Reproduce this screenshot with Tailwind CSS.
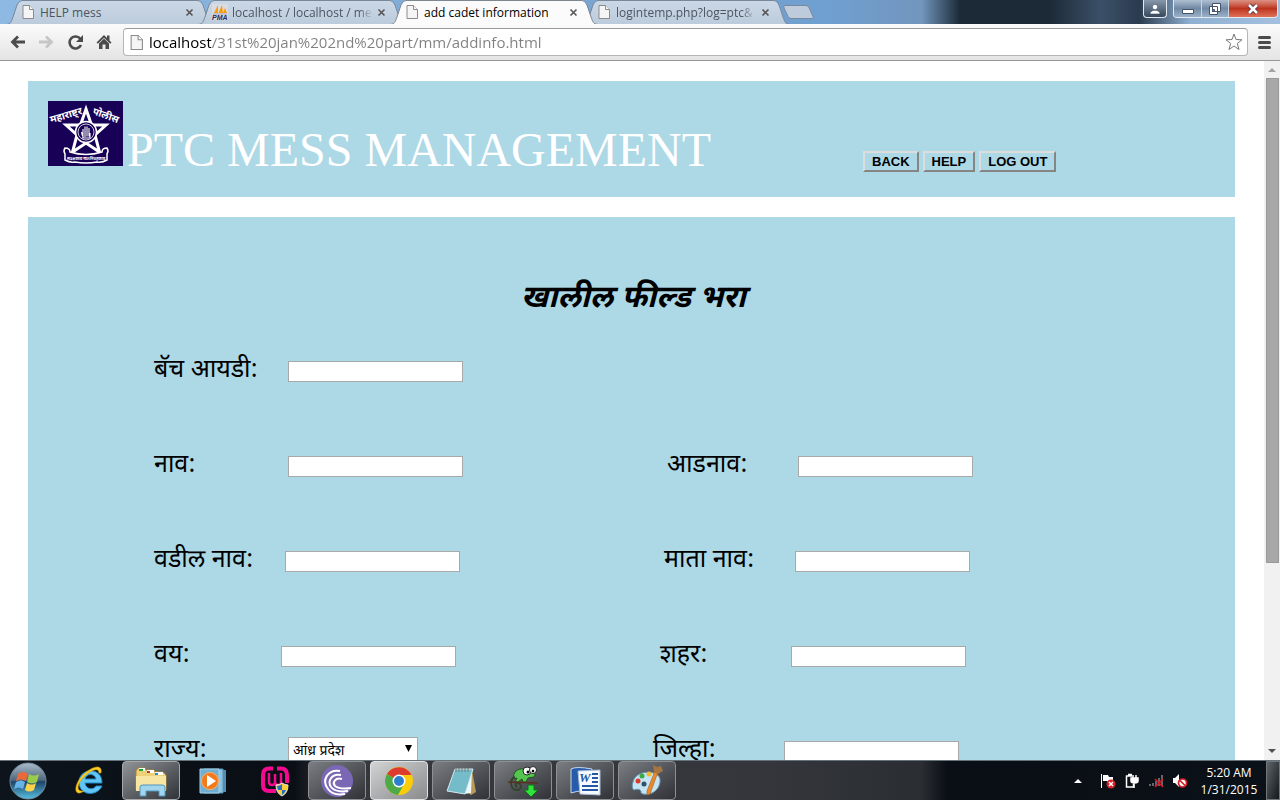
<!DOCTYPE html>
<html lang="mr">
<head>
<meta charset="utf-8">
<title>add cadet information</title>
<script src="https://cdn.jsdelivr.net/npm/@tailwindcss/browser@4"></script>
</head>
<body class="flex h-screen flex-col overflow-hidden bg-white font-['Open_Sans','Noto_Sans',sans-serif] text-black">

<svg class="absolute h-0 w-0" aria-hidden="true">
  <defs>
    <linearGradient id="tabFill" x1="0" y1="0" x2="0" y2="1"><stop offset="0" stop-color="#cbd8e6"/><stop offset="1" stop-color="#bccbdc"/></linearGradient>
    <linearGradient id="glass" x1="0" y1="0" x2="0" y2="1"><stop offset="0" stop-color="#a9bccb"/><stop offset=".48" stop-color="#4f667c"/><stop offset=".52" stop-color="#1d4468"/><stop offset="1" stop-color="#58bfe0"/></linearGradient>
  </defs>
  <symbol id="page" viewBox="0 0 12 14"><path d="M1 .5h6.500l4 4v9H1z" fill="#f5f5f5" stroke="#8b8b8b"/><path d="M7.500.5v4h4" fill="#fff" stroke="#8b8b8b"/></symbol>
  <symbol id="close" viewBox="0 0 9 9"><path d="M1.500 1.500l6 6m0-6l-6 6" stroke="#555" stroke-width="1.600"/></symbol>
  <symbol id="tab" viewBox="0 0 208 24" preserveAspectRatio="none"><path d="M0 24.500C5 24 5 22 7 17L11 5Q13 .5 16 .5H192Q195 .5 197 5l4 12c2 5 2 7 7 7.500"/></symbol>
</svg>

<!-- Tab strip -->
<header class="relative z-10 flex h-6 shrink-0 justify-between bg-[linear-gradient(90deg,#8eb9e2_0%,#7ba6d3_45%,#6f9fd0_65%,#7296bd_72%,#1c2a38_75%,#1c2a38_82%,#3b5068_86%,#2a3b4e_89%,#8fb0d2_93%,#a3c0de_100%)]">
  <nav class="relative flex pl-1.5" aria-label="Tabs">
    <div class="relative -mr-4 flex w-52 items-center gap-1.5 pl-4 pr-5">
      <svg class="absolute inset-0 h-6 w-52" fill="url(#tabFill)" stroke="#788799"><use href="#tab"/></svg>
      <svg class="relative h-3.5 w-3 shrink-0"><use href="#page"/></svg>
      <a href="#" class="relative flex-1 overflow-hidden whitespace-nowrap pt-0.5 text-xs text-[#4b5560]">HELP mess</a>
      <button class="relative" aria-label="Close tab"><svg class="h-[9px] w-[9px]"><use href="#close"/></svg></button>
    </div>
    <div class="relative -mr-4 flex w-52 items-center gap-1 pl-3.5 pr-5">
      <svg class="absolute inset-0 h-6 w-52" fill="url(#tabFill)" stroke="#788799"><use href="#tab"/></svg>
      <svg class="relative h-4 w-4 shrink-0" viewBox="0 0 16 16"><path d="M0 0h16v16H0z" fill="#d9dbe0"/><path d="M6 1L2 9h4zM10 1L6.500 9H11zM13 4l-2 5h4z" fill="#f89c0e"/><path d="M1 10h14" stroke="#a3a5bb"/><text x="0" y="16" font-family="Liberation Sans" font-size="7" font-weight="bold" font-style="italic" fill="#27285c">PMA</text></svg>
      <a href="#" class="relative flex-1 overflow-hidden whitespace-nowrap mask-r-from-90% pt-0.5 text-xs text-[#4b5560]">localhost / localhost / mes</a>
      <button class="relative" aria-label="Close tab"><svg class="h-[9px] w-[9px]"><use href="#close"/></svg></button>
    </div>
    <div class="relative z-10 -mr-4 flex w-52 items-center gap-1.5 pl-4 pr-5">
      <svg class="absolute inset-0 h-6 w-52 overflow-visible" fill="#fbfbfb" stroke="#7d8792"><use href="#tab"/></svg>
      <svg class="relative h-3.5 w-3 shrink-0"><use href="#page"/></svg>
      <a href="#" class="relative flex-1 overflow-hidden whitespace-nowrap pt-0.5 text-xs" aria-current="page">add cadet information</a>
      <button class="relative" aria-label="Close tab"><svg class="h-[9px] w-[9px]"><use href="#close"/></svg></button>
    </div>
    <div class="relative flex w-52 items-center gap-1.5 pl-4 pr-5">
      <svg class="absolute inset-0 h-6 w-52" fill="url(#tabFill)" stroke="#788799"><use href="#tab"/></svg>
      <svg class="relative h-3.5 w-3 shrink-0"><use href="#page"/></svg>
      <a href="#" class="relative flex-1 overflow-hidden whitespace-nowrap mask-r-from-90% pt-0.5 text-xs text-[#4b5560]">logintemp.php?log=ptc&amp;</a>
      <button class="relative" aria-label="Close tab"><svg class="h-[9px] w-[9px]"><use href="#close"/></svg></button>
    </div>
    <button class="-ml-2 self-start pt-1" aria-label="New tab"><svg class="h-4 w-8" viewBox="0 0 32 16"><path d="M3 1.500h21q2 0 3 2l4 9q1 2-1 2H9q-2 0-3-2L2 4Q1 1.500 3 1.500z" fill="#bdcbdc" stroke="#76899f"/></svg></button>
  </nav>
  <div class="flex gap-1.5 pr-0.5">
    <button class="flex h-[18px] w-6 items-center justify-center rounded-b border border-t-0 border-slate-200 bg-linear-to-b from-[#8798ab] to-[#39495d]" aria-label="User"><svg class="h-3 w-3" viewBox="0 0 12 12" fill="#fff" stroke="#34465b" stroke-width=".6"><circle cx="6" cy="4" r="2.700"/><path d="M1 11c0-5 10-5 10 0z"/></svg></button>
    <div class="flex h-[18px] overflow-hidden rounded-b border border-t-0 border-slate-200">
      <button class="flex w-7 items-center justify-center border-r border-slate-300 bg-linear-to-b from-[#aebfd1] via-[#7189a4] to-[#9bb1c8]" aria-label="Minimize"><svg class="h-3 w-3" viewBox="0 0 12 12"><path d="M.5 6.500h11v4H.5z" fill="#fff" stroke="#44546a"/></svg></button>
      <button class="flex w-[27px] items-center justify-center border-r border-slate-300 bg-linear-to-b from-[#aebfd1] via-[#7189a4] to-[#9bb1c8]" aria-label="Restore"><svg class="h-3 w-3" viewBox="0 0 12 12" fill="#fff" stroke="#44546a"><path d="M3.500.5h8v8h-8zM.5 3.500h8v8h-8z"/><path d="M3.500 6.500h2v2h-2z" fill="#6d8299"/></svg></button>
      <button class="flex w-12 items-center justify-center bg-linear-to-b from-[#db9082] via-[#bd321c] to-[#df7057]" aria-label="Close"><svg class="h-3 w-3" viewBox="0 0 12 12"><path d="M2 2l8 8m0-8l-8 8" stroke="#5a3540" stroke-width="4.500"/><path d="M2 2l8 8m0-8l-8 8" stroke="#fff" stroke-width="2.500"/></svg></button>
    </div>
  </div>
</header>

<!-- Toolbar -->
<div class="flex h-[37px] shrink-0 items-center border-b border-[#989898] bg-linear-to-b from-[#fbfbfb] to-[#e4e4e4] pr-[9px] pl-[9px]">
  <button class="mr-3" aria-label="Back"><svg class="h-4 w-[17px]" viewBox="0 0 17 16" fill="none" stroke="#4b4b4b" stroke-width="2.800"><path d="M16 8H4M9 2.500L3.500 8 9 13.500"/></svg></button>
  <button class="mr-3" aria-label="Forward"><svg class="h-4 w-[17px]" viewBox="0 0 17 16" fill="none" stroke="#c6c6c6" stroke-width="2.800"><path d="M1 8h12M8 2.500L13.500 8 8 13.500"/></svg></button>
  <button class="mr-3" aria-label="Reload"><svg class="h-[17px] w-[17px]" viewBox="0 0 17 17"><path d="M13.500 5A6 6 0 1 0 14 11" fill="none" stroke="#4b4b4b" stroke-width="2.600"/><path d="M16 1v7H9z" fill="#4b4b4b"/></svg></button>
  <button class="mr-[11px]" aria-label="Home"><svg class="h-4 w-4" viewBox="0 0 16 16" fill="#4b4b4b"><path d="M8 1L.5 8.500l1.300 1.300L8 3.700l6.200 6.100 1.300-1.300L13.500 6.500V1.500H11V4z"/><path d="M3 9.500l5-5 5 5V15H9.500v-4.500h-3V15H3z"/></svg></button>
  <div class="flex h-7 flex-1 items-center rounded-sm border border-[#b5b5b5] border-t-[#9a9a9a] bg-white pl-1.5 pr-1">
    <svg class="mr-1.5 h-[15px] w-[13px]"><use href="#page"/></svg>
    <input aria-label="Address" class="min-w-0 flex-1 bg-linear-to-r from-black from-[62px] to-[#808080] to-[62px] bg-clip-text text-[15px] text-transparent outline-none" value="localhost/31st%20jan%202nd%20part/mm/addinfo.html">
    <button aria-label="Bookmark"><svg class="h-[18px] w-[18px]" viewBox="0 0 18 18" fill="#fff" stroke="#777" stroke-linejoin="round"><path d="M9 1l2 5.500 6 .3-4.700 3.700L14 16.500 9 13l-5 3.500 1.700-6L1 6.800l6-.3z"/></svg></button>
  </div>
  <button class="ml-2.5" aria-label="Menu"><svg class="h-[13px] w-[13px]" viewBox="0 0 13 13" stroke="#4b4b4b" stroke-width="3" stroke-linecap="round"><path d="M1.500 1.500h10M1.500 6.500h10M1.500 11.500h10"/></svg></button>
</div>

<!-- Page -->
<div class="flex min-h-0 flex-1">
  <main class="flex min-w-0 flex-1 flex-col gap-5 overflow-hidden pt-5 pl-7 pr-[29px]">
    <section class="flex h-29 shrink-0 items-baseline bg-[#add8e6] pl-5 pt-5">
      <svg class="h-[65px] w-[75px]" viewBox="0 0 75 65" role="img" aria-label="Maharashtra Police">
        <path d="M0 0h75v65H0z" fill="#170055"/>
        <g fill="#fff" font-family="Noto Sans Devanagari, Noto Sans, sans-serif" font-weight="bold">
          <text x="3" y="22" font-size="10" transform="rotate(-16 3 22)">महाराष्ट्र</text>
          <text x="44" y="13" font-size="10" transform="rotate(20 44 13)">पोलीस</text>
        </g>
        <path d="M38 8l5.500 16H58L47 34l4.500 17L38 42 24.500 51 29 34 18 24h14.500z" fill="#170055" stroke="#fff" stroke-width="3"/>
        <circle cx="38" cy="31" r="10.500" fill="#170055" stroke="#fff" stroke-width="1.500"/>
        <circle cx="38" cy="31" r="8" fill="none" stroke="#fff" stroke-width=".8"/>
        <path d="M35 37v-9m2 8V25.500m2 10V25.500m2 10V27m-6.500 8l-1-4M34 37h8v-5" fill="none" stroke="#fff" stroke-width="1.100"/>
        <path d="M17 47q5 0 5 4 16 5 32 0 0-4 5-4 2 3 0 6v6q-5 3-10 2-11 2-22 0-5 1-10-2v-6q-2-3 0-6z" fill="#170055" stroke="#fff" stroke-width="1.500"/>
        <text x="19" y="59" font-size="4" font-weight="bold" fill="#fff" font-family="Noto Sans Devanagari, Noto Sans, sans-serif">सद्रक्षणाय खलनिग्रहणाय</text>
      </svg>
      <h1 class="ml-1 w-[736px] whitespace-nowrap font-['Liberation_Serif',serif] text-5xl text-white">PTC MESS MANAGEMENT</h1>
      <div class="flex gap-1 font-['Liberation_Sans',sans-serif] text-[13px] leading-[17px] font-bold">
        <button class="border-2 border-[#dddddd] border-r-[#858585] border-b-[#858585] px-[7px]">BACK</button>
        <button class="border-2 border-[#dddddd] border-r-[#858585] border-b-[#858585] px-[7px]">HELP</button>
        <button class="border-2 border-[#dddddd] border-r-[#858585] border-b-[#858585] px-[7px]">LOG OUT</button>
      </div>
    </section>

    <form class="flex-1 bg-[#add8e6] pt-14 pl-[126px] font-['Noto_Sans_Devanagari','Noto_Sans',sans-serif] text-[25px]">
      <h2 class="mr-[122px] text-center text-[31px] leading-[54px] font-bold italic">खालील फील्ड भरा</h2>
      <div class="mt-[18px] flex h-[95px] items-start leading-[52px]">
        <label for="batch" class="w-[134px]">बॅच आयडी:</label>
        <input id="batch" class="mt-4 h-[21px] w-[175px] border border-[#a9a9a9] bg-white px-1 text-sm">
      </div>
      <div class="flex h-[95px] items-start leading-[52px]">
        <label for="name" class="w-[134px]">नाव:</label>
        <input id="name" class="mt-4 mr-[204px] h-[21px] w-[175px] border border-[#a9a9a9] bg-white px-1 text-sm">
        <label for="surname" class="w-[131px]">आडनाव:</label>
        <input id="surname" class="mt-4 h-[21px] w-[175px] border border-[#a9a9a9] bg-white px-1 text-sm">
      </div>
      <div class="flex h-[95px] items-start leading-[52px]">
        <label for="father" class="w-[131px]">वडील नाव:</label>
        <input id="father" class="mt-4 mr-[204px] h-[21px] w-[175px] border border-[#a9a9a9] bg-white px-1 text-sm">
        <label for="mother" class="w-[131px]">माता नाव:</label>
        <input id="mother" class="mt-4 h-[21px] w-[175px] border border-[#a9a9a9] bg-white px-1 text-sm">
      </div>
      <div class="flex h-[95px] items-start leading-[52px]">
        <label for="age" class="w-[127px]">वय:</label>
        <input id="age" class="mt-4 mr-[204px] h-[21px] w-[175px] border border-[#a9a9a9] bg-white px-1 text-sm">
        <label for="city" class="w-[131px]">शहर:</label>
        <input id="city" class="mt-4 h-[21px] w-[175px] border border-[#a9a9a9] bg-white px-1 text-sm">
      </div>
      <div class="flex h-[95px] items-start leading-[52px]">
        <label for="state" class="w-[134px]">राज्य:</label>
        <div class="relative mt-3 mr-[235px] flex">
          <select id="state" class="h-[27px] w-[130px] appearance-none border border-[#a9a9a9] bg-white pt-0.5 pl-1 text-sm leading-6"><option>आंध्र प्रदेश</option></select>
          <svg class="pointer-events-none absolute top-2 right-1.5 h-[7px] w-[7px]" viewBox="0 0 7 7"><path d="M0 0h7L3.500 7z"/></svg>
        </div>
        <label for="district" class="w-[131px]">जिल्हा:</label>
        <input id="district" class="mt-4 h-[21px] w-[175px] border border-[#a9a9a9] bg-white px-1 text-sm">
      </div>
    </form>
  </main>
  <div class="flex w-4 flex-col items-center bg-[#f1f1f1]" aria-hidden="true">
    <svg class="h-[17px] w-4 shrink-0" viewBox="0 0 16 17"><path d="M4 11l4-4 4 4z" fill="#a3a3a3"/></svg>
    <div class="h-[69.4%] w-[13px] border border-[#999] bg-[#a8a8a8]"></div>
    <svg class="mt-auto h-[17px] w-4" viewBox="0 0 16 17"><path d="M4 6l4 4 4-4z" fill="#505050"/></svg>
  </div>
</div>

<!-- Taskbar -->
<footer class="flex h-10 shrink-0 border-t border-[#67717a] bg-[linear-gradient(90deg,#0d141b_0%,#0a0e15_23%,#34383c_26%,#34363b_60%,#2a2e33_72%,#0a0e15_74%,#0b1118_100%)] font-['Open_Sans',sans-serif]">
  <div class="flex gap-1">
    <button class="flex w-14 items-center justify-center" aria-label="Start"><svg class="h-[38px] w-[38px]" viewBox="0 0 38 38"><circle cx="19" cy="19" r="18" fill="url(#glass)" stroke="#718a9c"/><path d="M9 12q5-4 10 0l-2 7q-5-3-10 0z" fill="#e9693a"/><path d="M20 12q5 3 10 0l-2 8q-5 3-10 0z" fill="#9bcb4a"/><path d="M7 20q5-3 9 0l-2 7q-4-3-9 0z" fill="#67b4e8"/><path d="M18 21q5 3 9 0l-2 7q-5 3-9 0z" fill="#fbd24a"/></svg></button>
    <button class="flex w-[58px] items-center justify-center" aria-label="Internet Explorer"><svg class="h-9 w-9" viewBox="0 0 36 36"><path d="M31 20H14c1 7 9 7 11 3h6C26 34 8 33 8 19 8 5 31 3 31 20zM14 16h11c-1-6-10-6-11 0z" fill="#62c6f5" stroke="#1a88cc"/><path d="M30 10c2-11-12-5-19 3C2 23 3 35 13 28c-7 1-8-4-2-12C18 8 28 3 28 10z" fill="#f9cf26" stroke="#d69a0b" stroke-width=".6"/></svg></button>
    <button class="flex w-[58px] items-center justify-center rounded-sm border border-[#a5a8aa] bg-linear-to-br from-[#929598] to-[#303439]" aria-label="Explorer"><svg class="h-9 w-9" viewBox="0 0 36 36"><path d="M3 8l2-3h7l1 2h8l1 2h8l3 3v15H3z" fill="#edd17a" stroke="#ad8536"/><path d="M6 5h6v3H6z" fill="#fff"/><path d="M6 6h4v2H6z" fill="#18a82c"/><path d="M14 7h7v3h-7z" fill="#fff"/><path d="M14 8h3v2h-3z" fill="#c0392b"/><path d="M22 9h8v3h-8z" fill="#fff"/><path d="M22 10h3v2h-3z" fill="#1d8fe0"/><path d="M3 13h30v15H3z" fill="#f7e6a3"/><path d="M7 33v-9q0-2 3-2h19q3 0 3 2v9h-6v-5H13v5z" fill="#a1d5ed" stroke="#5095bb"/></svg></button>
    <button class="flex w-[58px] items-center justify-center" aria-label="Media Player"><svg class="h-8 w-8" viewBox="0 0 32 32"><path d="M12 5h17v22H12z" fill="#4f8fb4"/><path d="M7 4h19v24H7z" fill="#8dc1dd" stroke="#5693b7"/><path d="M3 4h19v24H3z" fill="#71aed0" stroke="#a4d2e9"/><circle cx="13" cy="16" r="8.500" fill="#f27a1a" stroke="#f8b174"/><path d="M10 10l9 6-9 6z" fill="#fff"/></svg></button>
    <button class="flex w-[58px] items-center justify-center" aria-label="WampServer"><svg class="h-8 w-8" viewBox="0 0 32 32"><path d="M14 3.500H10Q4 3.500 4 10v10q0 6 6 6h7M18 3.500h4q6 0 6 6.500v8" fill="none" stroke="#f30a8f" stroke-width="4"/><path d="M10 8v9q0 3 3 3t3-3V9v8q0 3 3 3t3-3V8" fill="none" stroke="#f30a8f" stroke-width="2.500"/><path d="M17 20q4 0 6-2 3 2 6 2 0 8-6 11-6-3-6-11z" fill="#f7ce35" stroke="#e1e5e8"/><path d="M18 21q3 0 5-2v6h-4zM23 25h4q-1 3-4 5z" fill="#2a6dc0"/></svg></button>
    <button class="flex w-[58px] items-center justify-center rounded-sm border border-[#8d8f93] bg-linear-to-br from-[#7b7e82] to-[#303238]" aria-label="BitTorrent"><svg class="h-[34px] w-[34px]" viewBox="0 0 34 34"><circle cx="17" cy="17" r="16" fill="#7a68b4"/><g fill="none" stroke="#fff" stroke-width="2"><path d="M20 7C8 5 1 16 8 25q5 7 17 5"/><path d="M21 11c-9-2-14 6-10 12 4 5 10 5 17 4"/><path d="M22 15c-7-2-10 4-7 7 4 3 9 3 16 2"/></g></svg></button>
    <button class="flex w-[58px] items-center justify-center rounded-sm border border-[#e2e2e2] bg-linear-to-br from-[#d3d3d3] to-[#898b8d]" aria-label="Chrome"><svg class="h-[30px] w-[30px]" viewBox="0 0 30 30"><circle cx="15" cy="15" r="14" fill="#fbcc0a"/><path d="M15 15L2.900 8A14 14 0 0 1 27.500 9H15z" fill="#dd3b2e"/><path d="M2.900 8A14 14 0 0 0 14 29l6-11-5-3z" fill="#4eaa48"/><circle cx="15" cy="15" r="6.500" fill="#fff"/><circle cx="15" cy="15" r="5" fill="#2c7fd0"/></svg></button>
    <button class="flex w-[58px] items-center justify-center rounded-sm border border-[#8d8f93] bg-linear-to-br from-[#7b7e82] to-[#303238]" aria-label="Notepad"><svg class="h-8 w-8" viewBox="0 0 32 32"><path d="M27 5l4 22-5 3-4-3z" fill="#b89b59"/><path d="M27 5l-1 23-7 1z" fill="#eef6f7"/><path d="M10 4h18l-8 25-18-3z" fill="#75bccb" stroke="#d5e9ed"/><path d="M11 3v4m3-4v4m3-4v4m3-4v4m3-4v4" stroke="#777"/></svg></button>
    <button class="flex w-[58px] items-center justify-center rounded-sm border border-[#8d8f93] bg-linear-to-br from-[#7b7e82] to-[#303238]" aria-label="Chameleon"><svg class="h-[34px] w-[34px]" viewBox="0 0 34 34"><path d="M8 15C6 8 12 4 18 5l7 1q6 3 3 7l-6 1-2 4h-3l-1-3-4 3H9l2-4z" fill="#54c64f" stroke="#1c541b"/><path d="M9 13c-6 2-5 13 2 13 5 0 5-7 1-7-3 0-3 3-1 4" fill="none" stroke="#32452c" stroke-width="2"/><path d="M2 18l30 1" stroke="#5b2e20" stroke-width="1.500"/><circle cx="21" cy="7" r="4" fill="#fff" stroke="#222"/><circle cx="27" cy="6" r="3.500" fill="#fff" stroke="#222"/><circle cx="22" cy="8" r="1.500"/><circle cx="27" cy="7" r="1.300"/><path d="M22 21h6v5h4l-7 7-7-7h4z" fill="#2de23a" stroke="#126c19"/></svg></button>
    <button class="flex w-[58px] items-center justify-center rounded-sm border border-[#8d8f93] bg-linear-to-br from-[#7b7e82] to-[#303238]" aria-label="Word"><svg class="h-8 w-8" viewBox="0 0 32 32"><path d="M2 4q5-3 21 0v23q-9-3-21 1z" fill="#285caa" stroke="#c5d8ef"/><path d="M9 6l22-1v25l-20-1z" fill="#f7faff" stroke="#a9bed8"/><text x="10" y="17" font-family="Liberation Serif" font-size="13" font-weight="bold" font-style="italic" fill="#2457a5">W</text><path d="M23 9h6m-6 4h6m-6 4h6M13 21h16m-16 4h16" stroke="#2457a5" stroke-width="2"/></svg></button>
    <button class="flex w-[58px] items-center justify-center rounded-sm border border-[#8d8f93] bg-linear-to-br from-[#7b7e82] to-[#303238]" aria-label="Paint"><svg class="h-[34px] w-[34px]" viewBox="0 0 34 34"><path d="M3 18C5 6 28 5 30 15c1 9-7 17-17 15q-3-1-2-3-2-3-7-1-3-2-1-8z" fill="#c5e5f5" stroke="#6597b2"/><circle cx="8" cy="17" r="2.500" fill="#db3a2d"/><circle cx="12" cy="12" r="2.500" fill="#3cab43"/><circle cx="19" cy="10" r="2.500" fill="#f2b92c"/><circle cx="14" cy="20" r="2.500" fill="#35506a"/><path d="M28 8l-8 22-3 1V27l8-20z" fill="#e88b2c" stroke="#a45815" stroke-width=".6"/><path d="M23 1l4 2 4-1 2 5-5 3-4-2z" fill="#a57542"/></svg></button>
  </div>
  <div class="ml-auto flex items-center text-white">
    <div class="flex items-center gap-2 pr-2">
      <svg class="mr-2.5 h-2 w-2" viewBox="0 0 8 8"><path d="M0 6h8L4 2z" fill="#fff"/></svg>
      <svg class="h-4 w-4" viewBox="0 0 16 16"><path d="M1.500 1v14" stroke="#fff"/><path d="M3 2h5l1 2h4v5H8L7 8H3z" fill="#fff"/><circle cx="11" cy="11" r="4.500" fill="#d51f2a"/><path d="M9 9l4 4m0-4l-4 4" stroke="#fff" stroke-width="1.500"/></svg>
      <svg class="h-4 w-4" viewBox="0 0 16 16" fill="none" stroke="#fff" stroke-width="1.500"><path d="M8 3H2.500v11h7v-3M4 1.500h4"/><path d="M7 5h7v3q0 2-3.500 2T7 8zM9 2v3m3-3v3m-2 5v5" fill="#fff"/></svg>
      <svg class="h-4 w-4" viewBox="0 0 16 16"><path d="M1 11h2v2H1zM4 10h2v3H4zM7 8h2v5H7zM10 5h2v8h-2zM13 2h2v11h-2z" fill="#62676a"/><path d="M7 6l8 8m0-8l-8 8" stroke="#d91520" stroke-width="1.700"/></svg>
      <svg class="h-4 w-4" viewBox="0 0 16 16"><path d="M1 5h2l4-4v13l-4-4H1z" fill="#fff"/><circle cx="10.500" cy="10" r="4" fill="#fff" stroke="#d51f2a" stroke-width="1.700"/><path d="M8 7.500l5 5" stroke="#d51f2a" stroke-width="1.700"/></svg>
    </div>
    <time class="w-[70px] pr-1 text-center text-xs leading-[17px]">5:20 AM<br>1/31/2015</time>
    <div class="h-full w-3.5 border border-[#70767a] bg-linear-to-br from-[#60666a] to-[#14191d]"></div>
  </div>
</footer>
</body>
</html>
